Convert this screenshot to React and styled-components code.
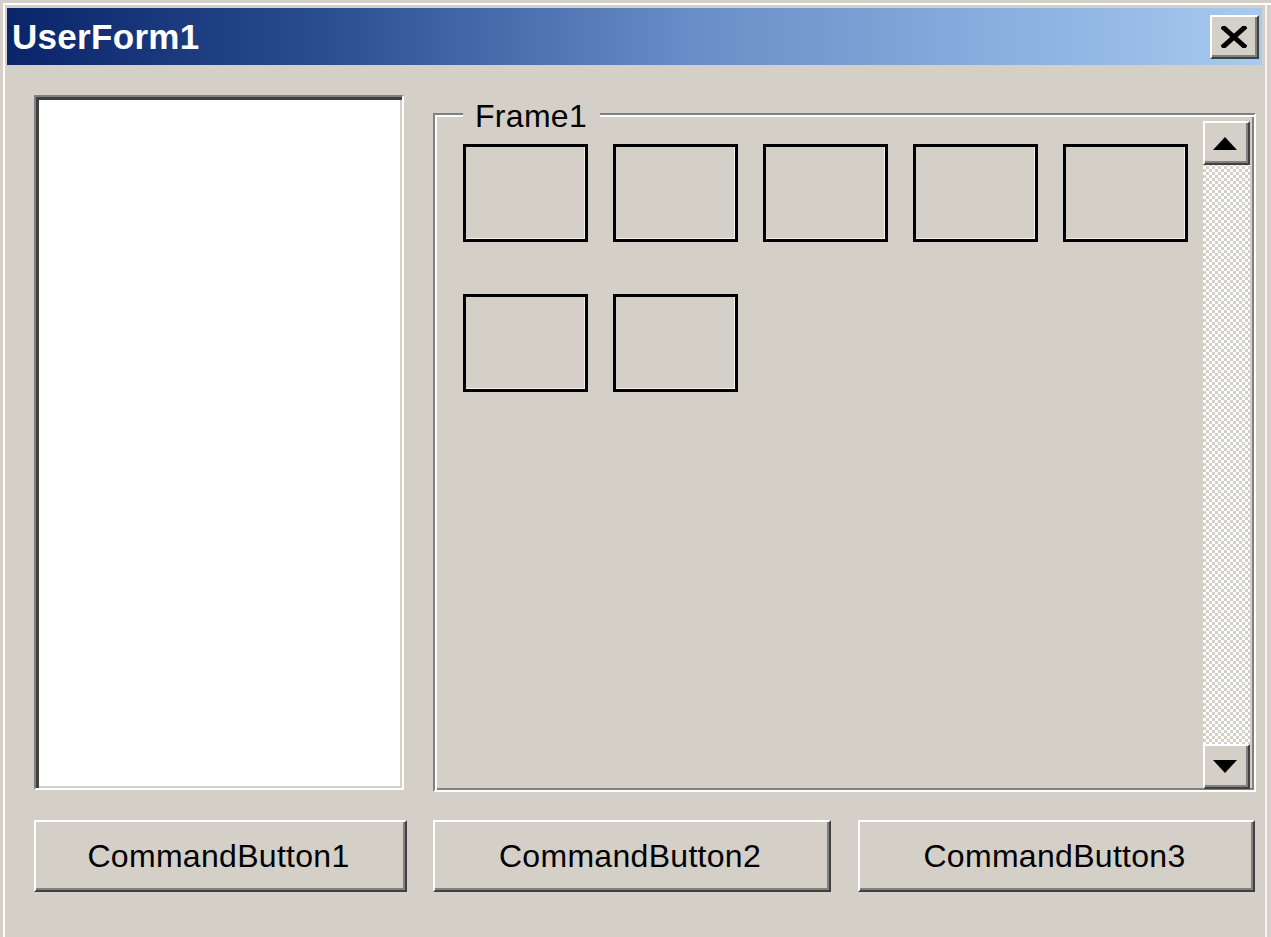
import React from "react";
import styled, { createGlobalStyle } from "styled-components";

const Global = createGlobalStyle`
  html, body { margin: 0; padding: 0; background: #d4d0c8; }
  body { font-family: "Liberation Sans", Arial, sans-serif; }
  * { box-sizing: border-box; }
`;

const Window = styled.div`
  width: 1271px;
  height: 937px;
  background: #d4d0c8;
  padding: 8px 9px 0 7px;
  box-shadow: inset 3px 3px #d4d0c8, inset 5px 5px #ffffff, inset -4px 0 #d4d0c8, inset -6px 0 #f4f3f0;
  overflow: hidden;
`;

const TitleBar = styled.div`
  height: 57px;
  display: flex;
  align-items: center;
  justify-content: space-between;
  padding-left: 5px;
  background: linear-gradient(to right, #0a246a 0%, #2a4d90 25%, #6a8ec8 55%, #a6caf0 100%);
`;

const Title = styled.span`
  color: #ffffff;
  font-weight: bold;
  font-size: 35px;
  letter-spacing: 0.3px;
  line-height: 1;
`;

const CloseButton = styled.div`
  width: 49px;
  height: 44px;
  margin-right: 3px;
  background: #d4d0c8;
  border: 2px solid;
  border-color: #ffffff #404040 #404040 #ffffff;
  box-shadow: inset -2px -2px #808080;
  display: flex;
  align-items: center;
  justify-content: center;
  padding-right: 2px;
`;

const Content = styled.div`
  padding-left: 27px;
`;

const MainRow = styled.div`
  display: flex;
  gap: 29px;
  margin-top: 30px;
  height: 697px;
`;

const ListBox = styled.div`
  width: 370px;
  height: 695px;
  background: #ffffff;
  border: 2px solid;
  border-color: #808080 #ffffff #ffffff #808080;
  box-shadow: inset 3px 3px #404040, inset -2px -2px #d4d0c8;
`;

const FrameBox = styled.div`
  position: relative;
  width: 823px;
  margin-top: 18px;
  height: 679px;
  border: 2px solid;
  border-color: #808080 #ffffff #ffffff #808080;
  box-shadow: inset 2px 2px #ffffff, inset -2px -2px #808080;
  display: flex;
`;

const FrameLabel = styled.span`
  position: absolute;
  left: 28px;
  top: -19px;
  padding: 0 13px 0 12px;
  background: #d4d0c8;
  font-size: 32px;
  line-height: 40px;
  letter-spacing: 0.3px;
  color: #000;
`;

const BoxGrid = styled.div`
  flex: 1;
  padding: 29px 0 0 28px;
  display: grid;
  grid-template-columns: repeat(5, 125px);
  grid-auto-rows: 98px;
  column-gap: 25px;
  row-gap: 52px;
  align-content: start;
`;

const SmallBox = styled.div`
  border: 3px solid #000;
  box-shadow: inset -1px -1px #f4f3f0;
  background: #d4d0c8;
`;

const ScrollBar = styled.div`
  width: 47px;
  margin: 6px 4px 1px 0;
  display: flex;
  flex-direction: column;
  background: conic-gradient(#ffffff 25%, #d4d0c8 0 50%, #ffffff 0 75%, #d4d0c8 0) 0 0 / 6px 6px;
`;

const ScrollButton = styled.div`
  height: ${(p) => p.h}px;
  background: #d4d0c8;
  border: 2px solid;
  border-color: #ffffff #404040 #404040 #ffffff;
  box-shadow: inset -2px -2px #808080;
  display: flex;
  align-items: center;
  justify-content: center;
  padding-right: 4px;
`;

const Track = styled.div`
  flex: 1;
`;

const ButtonRow = styled.div`
  display: flex;
  margin-top: 28px;
`;

const CommandButton = styled.div`
  width: ${(p) => p.w}px;
  margin-left: ${(p) => p.ml}px;
  height: 72px;
  background: #d4d0c8;
  border: 2px solid;
  border-color: #ffffff #404040 #404040 #ffffff;
  box-shadow: inset -2px -2px #808080;
  display: flex;
  align-items: center;
  justify-content: center;
  font-size: 32px;
  letter-spacing: 0.3px;
  color: #000;
  padding-right: 4px;
`;

const Arrow = ({ down }) => (
  <svg width="24" height="13" viewBox="0 0 24 13">
    {down ? <polygon points="0,0 24,0 12,13" fill="#000" /> : <polygon points="0,13 24,13 12,0" fill="#000" />}
  </svg>
);

export default function App() {
  return (
    <>
      <Global />
      <Window>
        <TitleBar>
          <Title>UserForm1</Title>
          <CloseButton>
            <svg width="26" height="22" viewBox="0 0 26 22">
              <path d="M3 2 L23 20 M23 2 L3 20" stroke="#000" strokeWidth="5" strokeLinecap="square" />
            </svg>
          </CloseButton>
        </TitleBar>
        <Content>
          <MainRow>
            <ListBox />
            <FrameBox>
              <FrameLabel>Frame1</FrameLabel>
              <BoxGrid>
                {Array.from({ length: 7 }).map((_, i) => (
                  <SmallBox key={i} />
                ))}
              </BoxGrid>
              <ScrollBar>
                <ScrollButton h={44}>
                  <Arrow />
                </ScrollButton>
                <Track />
                <ScrollButton h={45}>
                  <Arrow down />
                </ScrollButton>
              </ScrollBar>
            </FrameBox>
          </MainRow>
          <ButtonRow>
            <CommandButton w={373} ml={0}>CommandButton1</CommandButton>
            <CommandButton w={398} ml={26}>CommandButton2</CommandButton>
            <CommandButton w={397} ml={27}>CommandButton3</CommandButton>
          </ButtonRow>
        </Content>
      </Window>
    </>
  );
}
